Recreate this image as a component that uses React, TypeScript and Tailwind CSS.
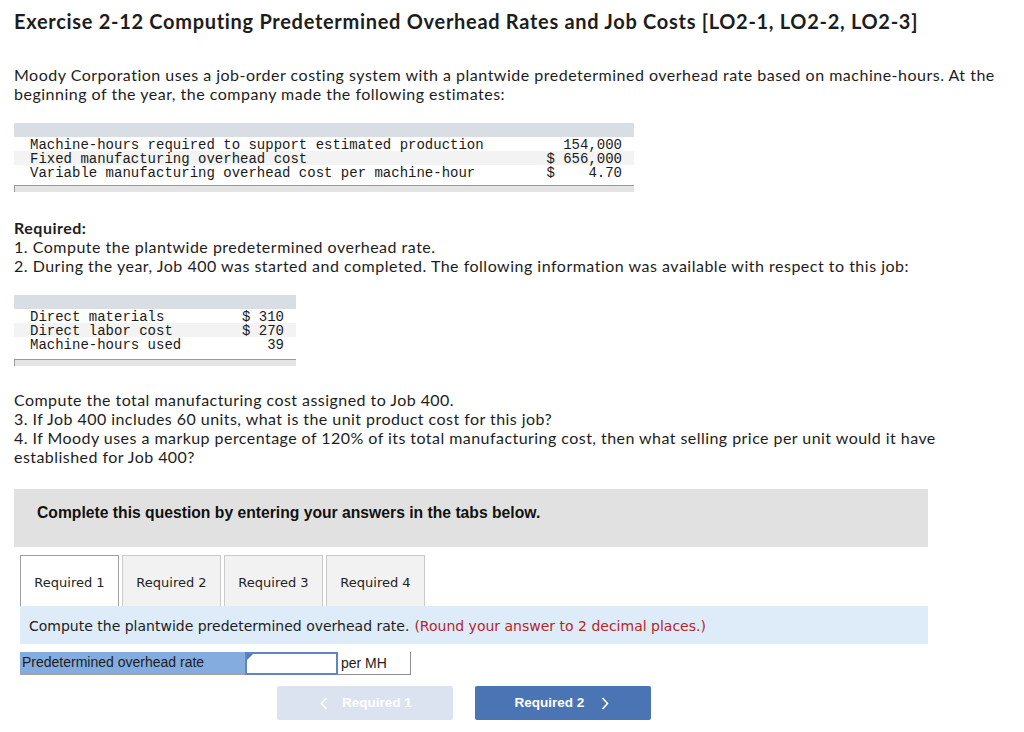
import React from "react";

const body = { fontFamily: "Lato, 'Open Sans', sans-serif" };
const mono = { fontFamily: "'Liberation Mono', 'Courier New', monospace" };
const verd = { fontFamily: "'DejaVu Sans', Verdana, sans-serif" };
const arial = { fontFamily: "'Liberation Sans', Arial, sans-serif" };

function DataTable({
  width,
  rows,
}: {
  width: number;
  rows: [string, string][];
}) {
  return (
    <div style={{ width }} className="text-[14px] leading-[14px] tracking-normal text-[#1a1a1a]">
      <div className="h-[14px] bg-[#d9dde4]" />
      {rows.map(([l, v], i) => (
        <div
          key={i}
          className={`flex h-[14px] justify-between pl-[16px] pr-[12px] pt-[1px] ${i % 2 === 1 ? "bg-[#f3f3f3]" : "bg-white"}`}
          style={mono}
        >
          <span className="whitespace-pre">{l}</span>
          <span className="whitespace-pre">{v}</span>
        </div>
      ))}
    </div>
  );
}

function TableFoot({ width, gap }: { width: number; gap: number }) {
  return (
    <div style={{ width, marginTop: gap }} className="h-[7px] border-l border-t border-[#9a9a9a] bg-[#e4e4e4]" />
  );
}

export default function App() {
  return (
    <div className="min-h-[732px] w-[1024px] bg-white pl-[14px] text-[#1d1d1d]" style={body}>
      <h1 className="pt-[9px] text-[20px] font-bold leading-[24px] tracking-[0.7px] whitespace-nowrap">
        Exercise 2-12 Computing Predetermined Overhead Rates and Job Costs [LO2-1, LO2-2, LO2-3]
      </h1>
      <p className="mt-[32px] text-[16px] leading-[19px] tracking-[0.5px] whitespace-nowrap">
        Moody Corporation uses a job-order costing system with a plantwide predetermined overhead rate based on machine-hours. At the
        <br />
        beginning of the year, the company made the following estimates:
      </p>

      <div className="mt-[20px]">
        <DataTable
          width={620}
          rows={[
            ["Machine-hours required to support estimated production", "  154,000"],
            ["Fixed manufacturing overhead cost", "$ 656,000"],
            ["Variable manufacturing overhead cost per machine-hour", "$    4.70"],
          ]}
        />
        <TableFoot width={620} gap={6} />
      </div>

      <div className="mt-[26px] text-[16px] leading-[19px] tracking-[0.5px] whitespace-nowrap">
        <div className="font-bold">Required:</div>
        <div>1. Compute the plantwide predetermined overhead rate.</div>
        <div>2. During the year, Job 400 was started and completed. The following information was available with respect to this job:</div>
      </div>

      <div className="mt-[20px]">
        <DataTable
          width={282}
          rows={[
            ["Direct materials", "$ 310"],
            ["Direct labor cost", "$ 270"],
            ["Machine-hours used", "   39"],
          ]}
        />
        <TableFoot width={282} gap={8} />
      </div>

      <div className="mt-[24px] text-[16px] leading-[19px] tracking-[0.45px] whitespace-nowrap">
        <div>Compute the total manufacturing cost assigned to Job 400.</div>
        <div>3. If Job 400 includes 60 units, what is the unit product cost for this job?</div>
        <div>4. If Moody uses a markup percentage of 120% of its total manufacturing cost, then what selling price per unit would it have</div>
        <div>established for Job 400?</div>
      </div>

      <div className="mt-[23px] h-[58px] w-[914px] bg-[#e1e1e1] pl-[23px] pt-[15px]">
        <div className="text-[15.7px] font-bold leading-[18px] text-[#111]" style={arial}>
          Complete this question by entering your answers in the tabs below.
        </div>
      </div>

      <div className="ml-[6px] w-[908px]">
        <div className="mt-[8px] flex h-[51px] gap-[3px]" style={verd}>
          {["Required 1", "Required 2", "Required 3", "Required 4"].map((t, i) => (
            <div
              key={t}
              className={`flex h-[51px] w-[99px] items-center justify-center border pt-[4px] text-[13px] text-[#222] ${i === 0 ? "border-[#a0a0a0] border-b-0 bg-white" : "border-[#cacaca] border-b-0 bg-[#f2f2f2]"}`}
            >
              {t}
            </div>
          ))}
        </div>
        <div className="flex h-[38px] items-center bg-[#deebf8] pl-[9px] pt-[3px] text-[14px] text-[#1d1d1d]" style={verd}>
          <span>Compute the plantwide predetermined overhead rate.</span>
          <span className="ml-[5px] text-[#b3262b]">(Round your answer to 2 decimal places.)</span>
        </div>

        <div className="mt-[8px] flex h-[23px]" style={arial}>
          <div className="flex w-[225px] items-center border-b-2 border-[#a3a3a3] bg-[#84acdf] pl-[2px] text-[14px] text-[#1d1d1d]">
            Predetermined overhead rate
          </div>
          <div className="relative h-[23px] w-[93px] border-2 border-[#5f86c4] bg-white">
            <svg className="absolute left-0 top-0" width="6" height="6" viewBox="0 0 6 6">
              <polygon points="0,0 6,0 0,6" fill="#4f79c0" />
            </svg>
          </div>
          <div className="flex w-[73px] items-center border-b border-r border-[#8f8f8f] bg-white pl-[3px] text-[14px] text-[#1d1d1d]">
            per MH
          </div>
        </div>

        <div className="ml-[257px] mt-[11px] flex gap-[22px]" style={arial}>
          <div className="flex h-[34px] w-[176px] items-center justify-center gap-[14px] rounded-[2px] bg-[#dae3ef] pl-[2px] text-[13.5px] font-bold text-white">
            <svg width="8" height="13" viewBox="0 0 8 13">
              <path d="M6.5 1 L1.5 6.5 L6.5 12" fill="none" stroke="white" strokeWidth="1.6" />
            </svg>
            <span>Required 1</span>
          </div>
          <div className="flex h-[34px] w-[176px] items-center justify-center gap-[17px] rounded-[2px] bg-[#4a74b3] pr-[2px] text-[13.5px] font-bold text-white">
            <span>Required 2</span>
            <svg width="8" height="13" viewBox="0 0 8 13">
              <path d="M1.5 1 L6.5 6.5 L1.5 12" fill="none" stroke="white" strokeWidth="1.6" />
            </svg>
          </div>
        </div>
      </div>
    </div>
  );
}
